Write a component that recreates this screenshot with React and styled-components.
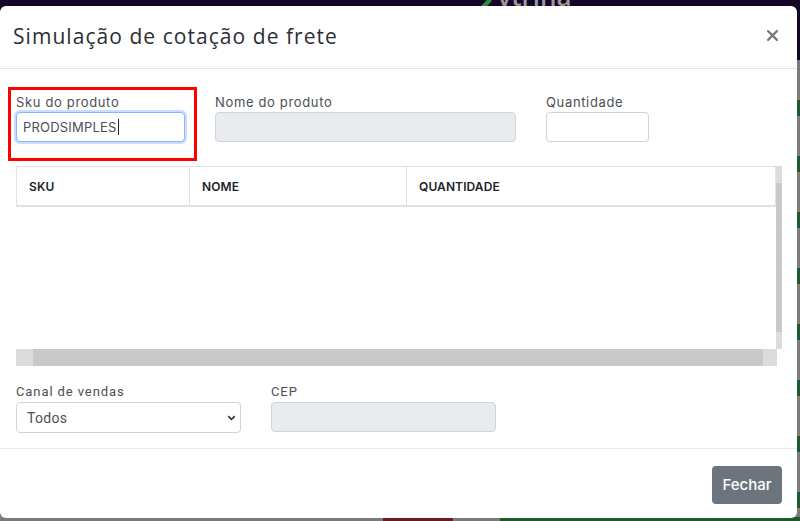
import styled, { createGlobalStyle } from "styled-components";

const GlobalStyle = createGlobalStyle`
  html, body {
    margin: 0;
    padding: 0;
    width: 800px;
    height: 521px;
    overflow: hidden;
    background: #7d7d7d;
  }
  * {
    box-sizing: border-box;
  }
`;

const Page = styled.div`
  position: relative;
  width: 800px;
  height: 521px;
  overflow: hidden;
  background: #7b7b7b;
`;

const Topbar = styled.div`
  height: 60px;
  background: #150627;
  display: flex;
  justify-content: center;
  padding-left: 245px;
`;

const Logo = styled.div`
  display: flex;
  align-items: flex-end;
  gap: 4px;
  margin-top: -14px;
  font-family: "Open Sans", sans-serif;
  font-size: 26px;
  font-weight: 600;
  color: #9a9a9a;
  height: 28px;

  svg {
    width: 20px;
    height: 20px;
  }
`;

const SideStripe = styled.div`
  position: absolute;
  right: 0;
  top: 60px;
  width: 8px;
  height: 461px;
  background: repeating-linear-gradient(
    180deg,
    #7b7b7b 0px,
    #7b7b7b 40px,
    #1d5a2a 40px,
    #1d5a2a 56px
  );
`;

const BottomStripe = styled.div`
  position: absolute;
  left: 383px;
  bottom: 0;
  width: 70px;
  height: 4px;
  background: #6e1a22;
`;

const BottomGreen = styled(BottomStripe)`
  left: 500px;
  width: 300px;
  background: #1d5a2a;
`;

const Modal = styled.div`
  position: absolute;
  left: 0;
  top: 6px;
  width: 797px;
  height: 512px;
  background: #fff;
  border-radius: 6px;
  display: flex;
  flex-direction: column;
  font-family: Inter, "Noto Sans", sans-serif;
  color: #212529;
`;

const Header = styled.div`
  height: 63px;
  display: flex;
  align-items: center;
  justify-content: space-between;
  padding: 0 16px 2px 13px;
  border-bottom: 1px solid #e5e7ea;
`;

const Title = styled.h5`
  margin: 0;
  font-family: "Open Sans", sans-serif;
  font-size: 21px;
  font-weight: 400;
  letter-spacing: 1.05px;
  color: #2b2f33;
`;

const Close = styled.button`
  border: 0;
  background: transparent;
  padding: 0;
  width: 18px;
  height: 18px;
  display: flex;
  align-items: center;
  justify-content: center;
  color: #777;
  margin-top: -2px;

  svg {
    width: 11px;
    height: 11px;
  }
`;

const Body = styled.div`
  flex: 1;
  padding: 25px 16px 0 16px;
  border-bottom: 1px solid #e5e7ea;
`;

const FieldRow = styled.div`
  display: flex;
  gap: 30px;
`;

const Field = styled.div`
  position: relative;
  width: ${(p) => p.$w}px;
  display: flex;
  flex-direction: column;
  gap: 2px;

  ${(p) =>
    p.$highlight &&
    `
    &::after {
      content: "";
      position: absolute;
      left: -8px;
      top: -7px;
      width: 183px;
      height: 68px;
      border: 3px solid #ff0000;
      pointer-events: none;
    }
  `}
`;

const Label = styled.label`
  font-family: ${(p) =>
    p.$narrow ? `"Roboto", sans-serif` : `Inter, "Noto Sans", sans-serif`};
  font-size: 13px;
  line-height: 16px;
  letter-spacing: ${(p) => (p.$narrow ? "0.9px" : "0.65px")};
  color: #4b4f54;
`;

const Input = styled.div`
  height: 30px;
  border: 1px solid ${(p) => (p.$focus ? "#86b7fe" : "#ced4da")};
  border-radius: 4px;
  background: ${(p) => (p.$disabled ? "#e9ecef" : "#fff")};
  box-shadow: ${(p) =>
    p.$focus ? "0 0 0 2px rgba(13, 110, 253, 0.22)" : "none"};
  display: flex;
  align-items: center;
  padding: 0 6px;
  font-size: 13px;
  color: #495057;
  letter-spacing: 0.2px;
`;

const Caret = styled.span`
  display: inline-block;
  width: 1px;
  height: 16px;
  background: #222;
  margin-left: 1px;
`;

const Select = styled.div`
  height: 31px;
  border: 1px solid #ced4da;
  border-radius: 4px;
  background: #fff;
  display: flex;
  align-items: center;
  justify-content: space-between;
  padding: 0 3px 0 10px;
  font-family: "Roboto", sans-serif;
  font-size: 14px;
  color: #495057;
  letter-spacing: 0.3px;

  svg {
    width: 11px;
    height: 11px;
  }
`;

const TableWrap = styled.div`
  margin-top: 24px;
  width: 766px;
  display: flex;
  flex-direction: column;
`;

const TableArea = styled.div`
  display: flex;
  height: 183px;
`;

const Table = styled.div`
  flex: 1;
  display: flex;
  flex-direction: column;
`;

const HeadRow = styled.div`
  display: grid;
  grid-template-columns: 173px 217px 1fr;
  height: 41px;
  border-top: 1px solid #dee2e6;
  border-bottom: 2px solid #dee2e6;
  border-left: 1px solid #dee2e6;
`;

const HeadCell = styled.div`
  display: flex;
  align-items: center;
  padding-left: 12px;
  border-right: 1px solid #dee2e6;
  font-size: 12px;
  font-weight: 600;
  color: #212529;
  letter-spacing: 0.1px;
`;

const VScroll = styled.div`
  width: 6px;
  background: #dcdcdc;
  display: flex;
  flex-direction: column;
  padding: 17px 0 17px 0;
`;

const VThumb = styled.div`
  flex: 1;
  background: #c9c9c9;
`;

const HScroll = styled.div`
  width: 761px;
  height: 17px;
  background: #dcdcdc;
  display: flex;
  padding: 0 14px 0 17px;
`;

const HThumb = styled.div`
  flex: 1;
  background: #c9c9c9;
`;

const BottomRow = styled(FieldRow)`
  margin-top: 18px;
`;

const Footer = styled.div`
  height: 69px;
  display: flex;
  align-items: center;
  justify-content: flex-end;
  padding: 0 15px 0 0;
`;

const Button = styled.button`
  height: 38px;
  width: 70px;
  border: 0;
  border-radius: 4px;
  background: #6c757d;
  color: #fff;
  font-family: Inter, "Noto Sans", sans-serif;
  font-size: 15px;
  font-weight: 500;
  margin-top: 2px;
`;

export default function App() {
  return (
    <>
      <GlobalStyle />
      <Page>
        <Topbar>
          <Logo>
            <svg viewBox="0 0 20 20">
              <path d="M2 18 L16 4 L19 7 L6 20 Z" fill="#2e8b3e" />
            </svg>
            vtrina
          </Logo>
        </Topbar>
        <SideStripe />
        <BottomStripe />
        <BottomGreen />
        <Modal>
          <Header>
            <Title>Simulação de cotação de frete</Title>
            <Close aria-label="Fechar">
              <svg viewBox="0 0 10 10">
                <path
                  d="M1 1 L9 9 M9 1 L1 9"
                  stroke="#7a7a7a"
                  strokeWidth="2"
                  strokeLinecap="round"
                />
              </svg>
            </Close>
          </Header>
          <Body>
            <FieldRow>
              <Field $w={169} $highlight>
                <Label>Sku do produto</Label>
                <Input $focus>
                  PRODSIMPLES
                  <Caret />
                </Input>
              </Field>
              <Field $w={301}>
                <Label>Nome do produto</Label>
                <Input $disabled />
              </Field>
              <Field $w={103}>
                <Label>Quantidade</Label>
                <Input />
              </Field>
            </FieldRow>

            <TableWrap>
              <TableArea>
                <Table>
                  <HeadRow>
                    <HeadCell>SKU</HeadCell>
                    <HeadCell>NOME</HeadCell>
                    <HeadCell>QUANTIDADE</HeadCell>
                  </HeadRow>
                </Table>
                <VScroll>
                  <VThumb />
                </VScroll>
              </TableArea>
              <HScroll>
                <HThumb />
              </HScroll>
            </TableWrap>

            <BottomRow>
              <Field $w={225}>
                <Label $narrow>Canal de vendas</Label>
                <Select>
                  Todos
                  <svg viewBox="0 0 12 12">
                    <path
                      d="M2.5 4.5 L6 8 L9.5 4.5"
                      fill="none"
                      stroke="#343a40"
                      strokeWidth="1.8"
                    />
                  </svg>
                </Select>
              </Field>
              <Field $w={225}>
                <Label $narrow>CEP</Label>
                <Input $disabled />
              </Field>
            </BottomRow>
          </Body>
          <Footer>
            <Button>Fechar</Button>
          </Footer>
        </Modal>
      </Page>
    </>
  );
}
